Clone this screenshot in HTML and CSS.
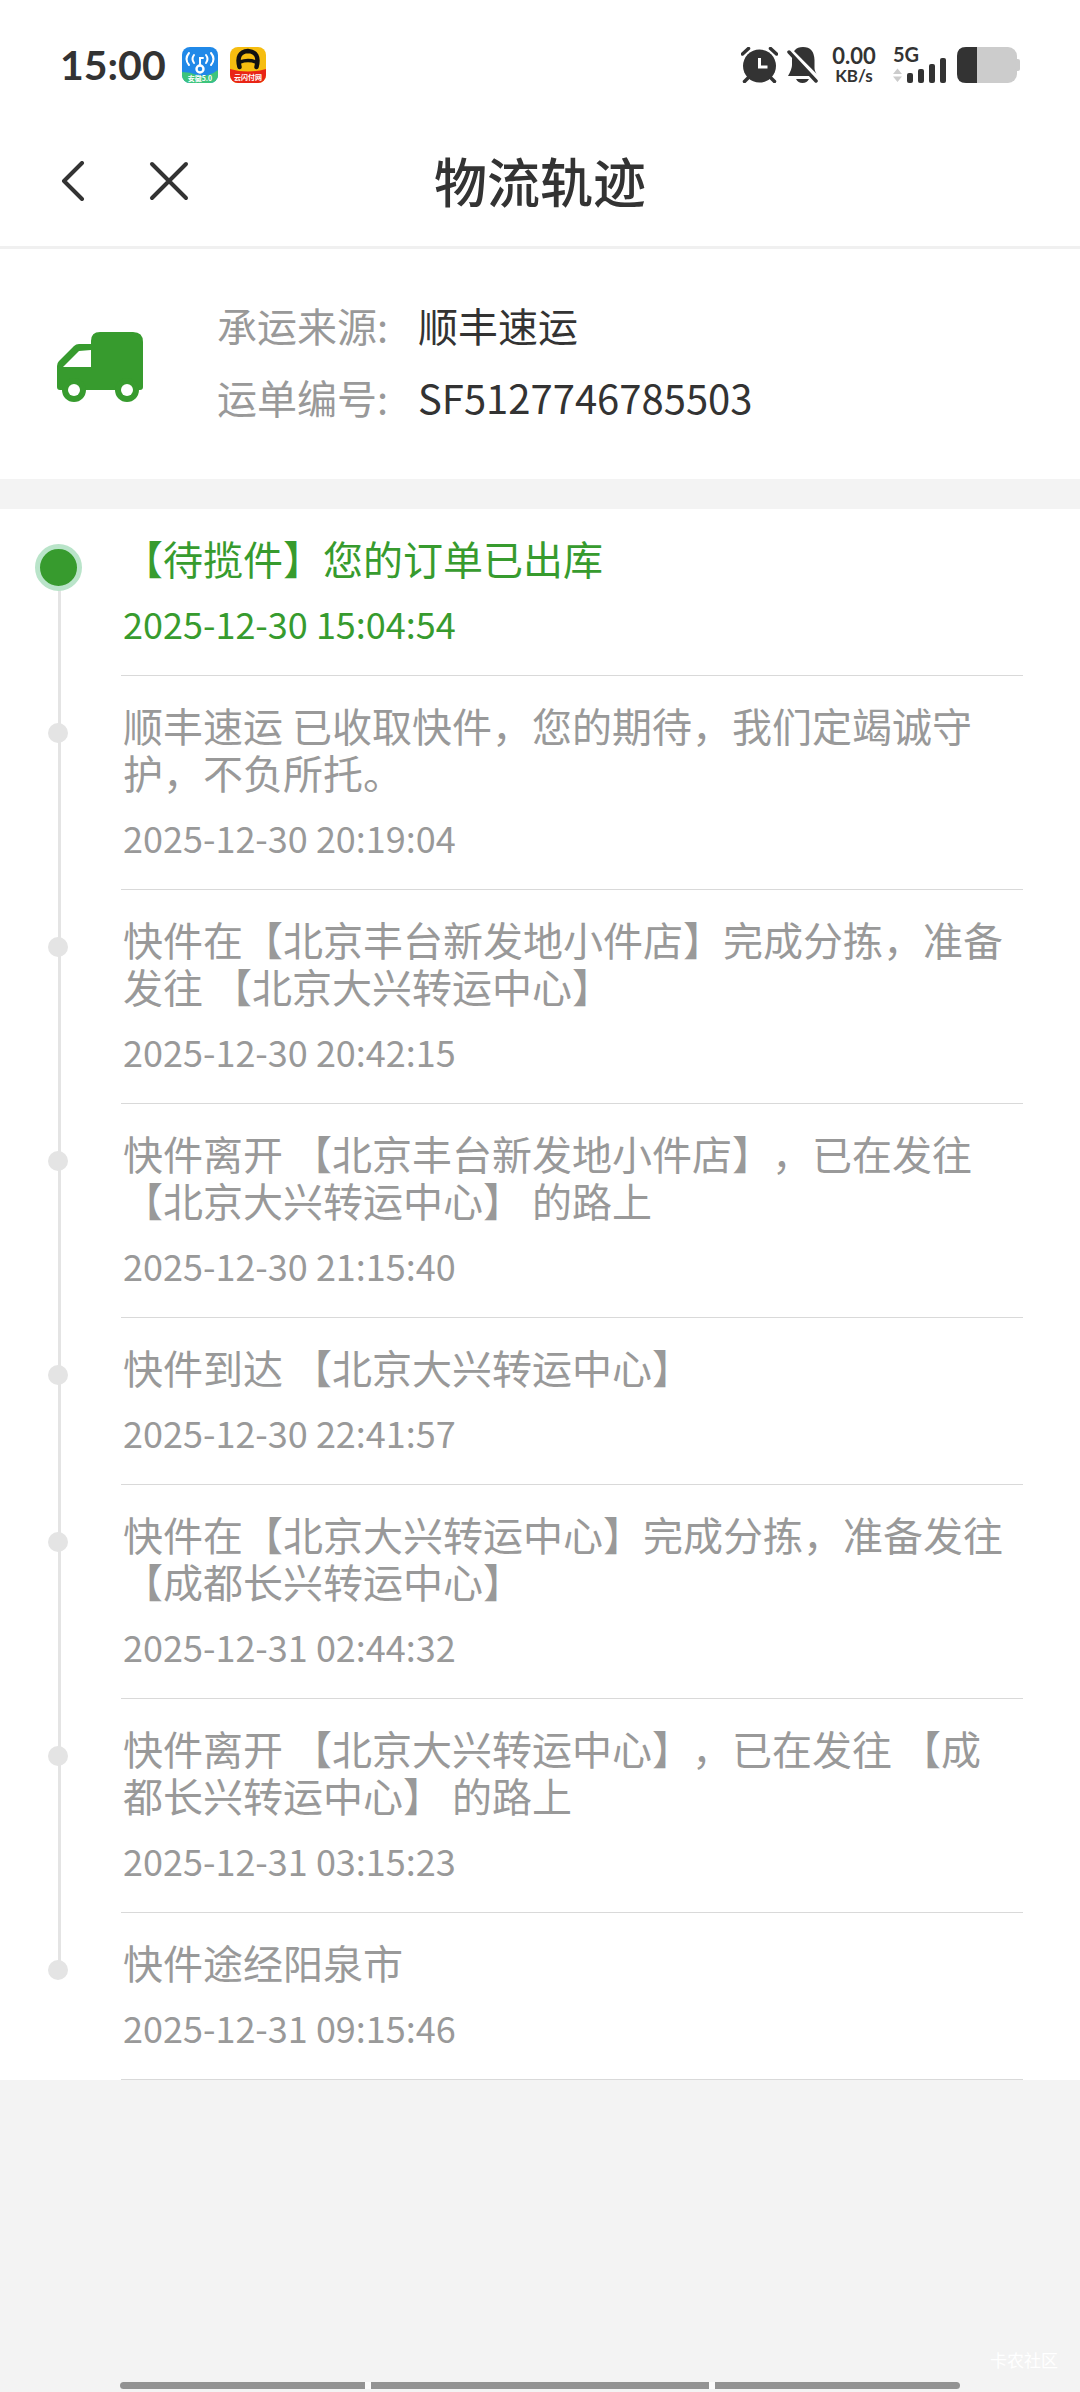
FILE: index.html
```html
<!DOCTYPE html>
<html lang="zh-CN">
<head>
  <meta charset="UTF-8" />
  <meta name="viewport" content="width=device-width, initial-scale=1.0"/>
  <title>物流轨迹</title>
  <link rel="stylesheet" href="styles.css">
</head>
<body>

  <div class="status-bar">
    <div class="status-left">
      <span class="clock">15:00</span>
      <svg class="app-icon" viewBox="0 0 36 36">
        <defs>
          <clipPath id="appClip"><rect width="36" height="36" rx="8"/></clipPath>
        </defs>
        <g clip-path="url(#appClip)">
          <rect width="36" height="36" fill="#2089e8"/>
          <path d="M0 25q8 0 15 3q10 3 21-5v13H0z" fill="#3cc47c"/>
          <g fill="none" stroke="#fff" stroke-width="2" stroke-linecap="round">
            <path d="M7 6q-5 6 0 12M12 8q-3 4 0 8M29 6q5 6 0 12M24 8q3 4 0 8"/>
            <path d="M18 18v-7h3"/>
            <circle cx="18" cy="22" r="3.5" stroke-width="2.4"/>
          </g>
          <text x="18" y="34" class="app-text">安徽5.0</text>
        </g>
      </svg>
      <svg class="app-icon" viewBox="0 0 36 36">
        <g clip-path="url(#appClip)">
          <rect width="36" height="36" fill="#f6bd10"/>
          <path d="M0 22q18 5 36 0v14H0z" fill="#e92416"/>
          <path d="M9.500 20q-4-15 8.500-16q12.500 1 8.500 16" fill="none" stroke="#111" stroke-width="4.500" stroke-linecap="round"/>
          <path d="M10 15q8-3 16 0" fill="none" stroke="#111" stroke-width="3.500"/>
          <text x="18" y="33" class="app-text">云闪付网</text>
        </g>
      </svg>
    </div>
    <div class="status-right">
      <svg class="alarm" viewBox="0 0 37 36">
        <circle cx="18.500" cy="19" r="16.500" fill="#333"/>
        <path d="M1.500 7l6-5.500M35.500 7l-6-5.500M3.500 34.500l4-4M33.500 34.500l-4-4" stroke="#333" stroke-width="3.500" stroke-linecap="round"/>
        <path d="M18.500 11v9h8" fill="none" stroke="#fff" stroke-width="3"/>
      </svg>
      <svg class="bell" viewBox="0 0 32 36">
        <path d="M16 0q11 0 11.500 13v8q0 3 3 8H1q4-7 4-11v-5Q5 0 16 0z" fill="#333"/>
        <path d="M9 32h13q-2 4-6.500 4T9 32z" fill="#333"/>
        <path d="M3 3l29 29" stroke="#fff" stroke-width="4"/>
        <path d="M2 5l27 29" stroke="#333" stroke-width="3.500" stroke-linecap="round"/>
      </svg>
      <div class="speed"><b>0.00</b><small>KB/s</small></div>
      <div class="signal">
        <span>5G</span>
        <svg viewBox="0 0 54 26">
          <path d="M0 17l4.500-5.500L9 17zM0 19.500L4.500 25L9 19.500z" fill="#ccc"/>
          <g fill="#333">
            <rect x="14" y="16" width="6" height="10" rx="2"/>
            <rect x="25" y="12" width="6" height="14" rx="2"/>
            <rect x="36" y="7" width="6" height="19" rx="2"/>
            <rect x="47" y="1" width="6" height="25" rx="2"/>
          </g>
        </svg>
      </div>
      <svg class="battery" viewBox="0 0 63 36">
        <rect width="60" height="36" rx="9" fill="#ccc"/>
        <rect x="58" y="12" width="5" height="12" rx="2" fill="#ccc"/>
        <path d="M20 0H9Q0 0 0 9v18q0 9 9 9h11z" fill="#333"/>
      </svg>
    </div>
  </div>

  <header class="nav">
    <div class="nav-buttons">
      <button class="nav-button" aria-label="返回">
        <svg class="icon-back" viewBox="0 0 24 40"><path d="M21 2L3 20l18 18"/></svg>
      </button>
      <button class="nav-button" aria-label="关闭">
        <svg class="icon-close" viewBox="0 0 40 40"><path d="M3 3l34 34M37 3L3 37"/></svg>
      </button>
    </div>
    <h1>物流轨迹</h1>
  </header>

  <section class="carrier">
    <svg class="truck" viewBox="0 -4 86 82">
      <path d="M34 20V17Q34 8 43 8H76Q86 8 86 18V63Q86 66 83 66H3Q0 66 0 63V42Q0 39 2 37L17 22Q19 20 22 20Z" fill="#379b2e"/>
      <path d="M34 26v17H6L22 27z" fill="#fff"/>
      <circle cx="17" cy="66" r="12" fill="#379b2e"/>
      <circle cx="70" cy="66" r="12" fill="#379b2e"/>
      <circle cx="17" cy="66" r="6" fill="#fff"/>
      <circle cx="70" cy="66" r="6" fill="#fff"/>
    </svg>
    <dl>
      <div><dt>承运来源:</dt><dd>顺丰速运</dd></div>
      <div><dt>运单编号:</dt><dd>SF5127746785503</dd></div>
    </dl>
  </section>

  <ol class="track">
    <li class="current">
      <p>【待揽件】您的订单已出库</p>
      <time>2025-12-30 15:04:54</time>
    </li>
    <li>
      <p>顺丰速运 已收取快件，您的期待，我们定竭诚守护，不负所托。</p>
      <time>2025-12-30 20:19:04</time>
    </li>
    <li>
      <p>快件在【北京丰台新发地小件店】完成分拣，准备发往 【北京大兴转运中心】</p>
      <time>2025-12-30 20:42:15</time>
    </li>
    <li>
      <p>快件离开 【北京丰台新发地小件店】，已在发往 【北京大兴转运中心】 的路上</p>
      <time>2025-12-30 21:15:40</time>
    </li>
    <li>
      <p>快件到达 【北京大兴转运中心】</p>
      <time>2025-12-30 22:41:57</time>
    </li>
    <li>
      <p>快件在【北京大兴转运中心】完成分拣，准备发往 【成都长兴转运中心】</p>
      <time>2025-12-31 02:44:32</time>
    </li>
    <li>
      <p>快件离开 【北京大兴转运中心】，已在发往 【成都长兴转运中心】 的路上</p>
      <time>2025-12-31 03:15:23</time>
    </li>
    <li>
      <p>快件途经阳泉市</p>
      <time>2025-12-31 09:15:46</time>
    </li>
  </ol>

  <footer class="bottom">
    <div class="watermark">卡农社区</div>
    <div class="home-bar"><i></i><i></i><i></i></div>
  </footer>

</body>
</html>
```
FILE: styles.css
```css
*, *::before, *::after { box-sizing: border-box; }
body { font-family: "Noto Sans CJK SC", sans-serif; background: #f3f3f3; color: #333; margin: 0; min-height: 100vh; display: flex; flex-direction: column; text-spacing-trim: space-all; }
svg { display: block; }
h1, p, dl, dd, ol { margin: 0; padding: 0; }

/* status bar */
.status-bar { display: flex; justify-content: space-between; align-items: center; height: 116px; padding: 14px 60px 0; background: #fff; }
.status-left, .status-right { display: flex; align-items: center; }
.status-left { gap: 12px; }
.clock { font: bold 41px/48px Lato, sans-serif; margin-right: 4px; }
.app-icon { width: 36px; height: 36px; }
.app-text { font-size: 7px; font-weight: bold; fill: #fff; text-anchor: middle; }
.alarm { width: 37px; height: 36px; margin-right: 9px; }
.bell { width: 32px; height: 36px; margin-right: 12px; }
.speed { display: flex; flex-direction: column; align-items: center; width: 46px; margin-right: 16px; font-family: Lato, sans-serif; }
.speed b { font-size: 22px; line-height: 22px; }
.speed small { font-size: 17px; line-height: 18px; font-weight: bold; }
.signal { width: 54px; height: 36px; margin-right: 10px; display: flex; flex-direction: column; justify-content: space-between; }
.signal span { font: bold 20px/14px Lato, sans-serif; height: 10px; }
.signal svg { width: 54px; height: 26px; }
.battery { width: 63px; height: 36px; }

/* title bar */
.nav { display: grid; grid-template-columns: 1fr auto 1fr; align-items: center; height: 133px; padding: 0 61px; background: #fff; border-bottom: 3px solid #f0f0f0; }
.nav h1 { font-size: 53px; font-weight: 500; line-height: 76px; padding-bottom: 2px; }
.nav-buttons { display: flex; gap: 64px; }
.nav-button { background: none; border: none; padding: 0; cursor: pointer; }
.nav-button path { fill: none; stroke: #333; stroke-width: 4; stroke-linecap: round; stroke-linejoin: round; }
.icon-back { width: 24px; height: 40px; }
.icon-close { width: 40px; height: 40px; }

/* carrier info */
.carrier { display: flex; align-items: center; padding: 40px 57px 46px; background: #fff; font-size: 40px; line-height: 72px; }
.truck { width: 86px; height: 82px; margin-right: 74px; }
.carrier dl div { display: flex; }
.carrier dt { width: 201px; color: #999; }

/* timeline */
.track { list-style: none; margin-top: 30px; padding: 0 57px 0 121px; background: #fff; color: #999; }
.track li { position: relative; padding: 26px 10px 31px 2px; border-bottom: 1px solid #d9d9d9; }
.track p { font-size: 40px; line-height: 47px; margin-bottom: 20px; }
.track time { display: block; font-size: 36px; line-height: 42px; }
.track li::before { content: ""; position: absolute; left: -63px; top: 58px; bottom: -59px; width: 3px; background: #e4e4e4; }
.track li:last-child::before { display: none; }
.track li::after { content: ""; position: absolute; left: -73px; top: 47px; width: 20px; height: 20px; border-radius: 50%; background: #e4e4e4; }
.track .current { color: #379b2e; }
.track .current::after { left: -86px; top: 35px; width: 47px; height: 47px; background: #379b2e; border: 5px solid #b9e4c9; }

/* bottom */
.bottom { margin-top: auto; position: relative; padding: 0 120px 3px; }
.home-bar { display: grid; grid-template-columns: 245fr 338fr 245fr; gap: 6px; background: #fafafa; border-radius: 4px; overflow: hidden; }
.home-bar i { height: 7px; background: #929292; }
.watermark { position: absolute; right: 22px; bottom: 20px; font-size: 17px; line-height: 24px; color: #fff; }
```
